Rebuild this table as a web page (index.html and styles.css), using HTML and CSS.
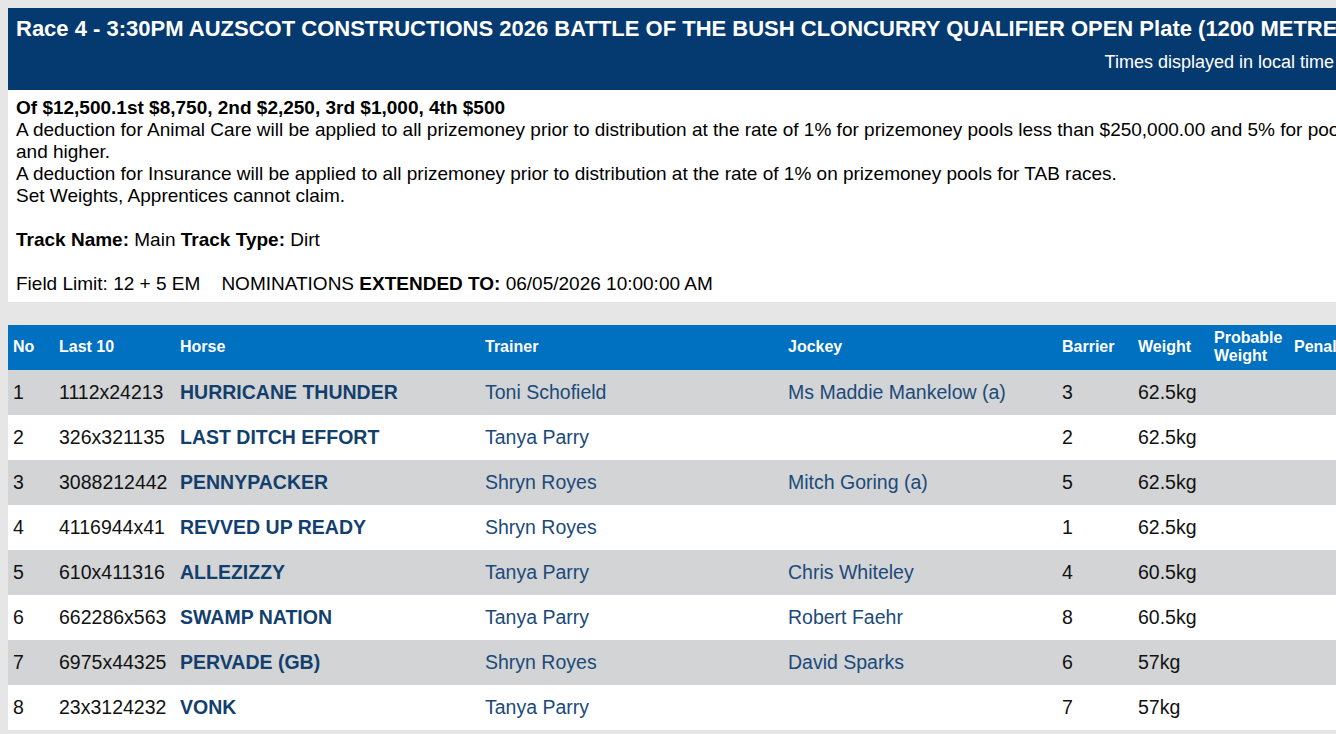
FILE: index.html
```html
<!DOCTYPE html>
<html lang="en">
<head>
<meta charset="utf-8">
<title>Race 4</title>
<link rel="stylesheet" href="styles.css">
</head>
<body>
<div class="page">
  <header class="race-header">
    <h1 class="race-title">Race 4 - 3:30PM AUZSCOT CONSTRUCTIONS 2026 BATTLE OF THE BUSH CLONCURRY QUALIFIER OPEN Plate (1200 METRES)</h1>
    <div class="local-time">Times displayed in local time</div>
  </header>
  <section class="race-info">
    <div class="prize"><b>Of $12,500.1st $8,750, 2nd $2,250, 3rd $1,000, 4th $500</b></div>
    <div>A deduction for Animal Care will be applied to all prizemoney prior to distribution at the rate of 1% for prizemoney pools less than $250,000.00 and 5% for pools $250,000.00<br>and higher.</div>
    <div>A deduction for Insurance will be applied to all prizemoney prior to distribution at the rate of 1% on prizemoney pools for TAB races.</div>
    <div>Set Weights, Apprentices cannot claim.</div>
    <div class="blank"></div>
    <div><b>Track Name:</b> Main <b>Track Type:</b> Dirt</div>
    <div class="blank"></div>
    <div>Field Limit: 12 + 5 EM &nbsp;&nbsp; NOMINATIONS <b>EXTENDED TO:</b> 06/05/2026 10:00:00 AM</div>
  </section>
  <table class="field">
    <colgroup>
      <col class="c-no"><col class="c-last"><col class="c-horse"><col class="c-trainer"><col class="c-jockey"><col class="c-barrier"><col class="c-weight"><col class="c-prob"><col class="c-pen">
    </colgroup>
    <thead>
      <tr><th>No</th><th>Last 10</th><th>Horse</th><th>Trainer</th><th>Jockey</th><th>Barrier</th><th>Weight</th><th>Probable Weight</th><th>Penalty</th></tr>
    </thead>
    <tbody>
      <tr><td>1</td><td>1112x24213</td><td class="horse">HURRICANE THUNDER</td><td class="link">Toni Schofield</td><td class="link">Ms Maddie Mankelow (a)</td><td>3</td><td>62.5kg</td><td></td><td></td></tr>
      <tr><td>2</td><td>326x321135</td><td class="horse">LAST DITCH EFFORT</td><td class="link">Tanya Parry</td><td class="link"></td><td>2</td><td>62.5kg</td><td></td><td></td></tr>
      <tr><td>3</td><td>3088212442</td><td class="horse">PENNYPACKER</td><td class="link">Shryn Royes</td><td class="link">Mitch Goring (a)</td><td>5</td><td>62.5kg</td><td></td><td></td></tr>
      <tr><td>4</td><td>4116944x41</td><td class="horse">REVVED UP READY</td><td class="link">Shryn Royes</td><td class="link"></td><td>1</td><td>62.5kg</td><td></td><td></td></tr>
      <tr><td>5</td><td>610x411316</td><td class="horse">ALLEZIZZY</td><td class="link">Tanya Parry</td><td class="link">Chris Whiteley</td><td>4</td><td>60.5kg</td><td></td><td></td></tr>
      <tr><td>6</td><td>662286x563</td><td class="horse">SWAMP NATION</td><td class="link">Tanya Parry</td><td class="link">Robert Faehr</td><td>8</td><td>60.5kg</td><td></td><td></td></tr>
      <tr><td>7</td><td>6975x44325</td><td class="horse">PERVADE (GB)</td><td class="link">Shryn Royes</td><td class="link">David Sparks</td><td>6</td><td>57kg</td><td></td><td></td></tr>
      <tr><td>8</td><td>23x3124232</td><td class="horse">VONK</td><td class="link">Tanya Parry</td><td class="link"></td><td>7</td><td>57kg</td><td></td><td></td></tr>
    </tbody>
  </table>
</div>
</body>
</html>
```

FILE: styles.css
```css
html, body {
  margin: 0;
  padding: 0;
  overflow: hidden;
}
body {
  background: #e6e6e6;
  font-family: "Liberation Sans", Arial, sans-serif;
  color: #000;
}
.page {
  padding: 8px 0 0 8px;
  width: 1500px;
}
.race-header {
  background: #053a70;
  color: #fff;
  width: 1340px;
  box-sizing: border-box;
  height: 82px;
  padding: 9px 14px 0 8px;
}
.race-title {
  margin: 0;
  font-size: 22px;
  line-height: 24px;
  font-weight: bold;
  white-space: nowrap;
}
.local-time {
  margin-top: 11px;
  text-align: right;
  font-size: 18px;
  line-height: 20px;
}
.race-info {
  background: #fff;
  width: 1480px;
  box-sizing: border-box;
  padding: 7px 8px 7px 8px;
  font-size: 19px;
  line-height: 22px;
  white-space: nowrap;
}
.race-info .blank {
  height: 22px;
}
.field {
  margin-top: 23px;
  border-collapse: collapse;
  table-layout: fixed;
  width: 1380px;
  font-size: 19.5px;
}
.c-no { width: 46px; }
.c-last { width: 121px; }
.c-horse { width: 305px; }
.c-trainer { width: 303px; }
.c-jockey { width: 274px; }
.c-barrier { width: 76px; }
.c-weight { width: 76px; }
.c-prob { width: 80px; }
.c-pen { width: 99px; }
.field th {
  background: #0070c0;
  color: #fff;
  font-size: 16px;
  line-height: 18px;
  font-weight: bold;
  text-align: left;
  height: 45px;
  padding: 0 5px 1px;
  box-sizing: border-box;
  vertical-align: middle;
  white-space: normal;
}
.field td {
  height: 45px;
  padding: 0 5px 1px;
  box-sizing: border-box;
  vertical-align: middle;
  white-space: nowrap;
  color: #111;
}
.field tbody tr:nth-child(odd) td {
  background: #d3d4d6;
}
.field tbody tr:nth-child(even) td {
  background: #fff;
}
.field td.horse {
  font-weight: bold;
  color: #123f6d;
}
.field td.link {
  color: #1b4a7a;
}
```
